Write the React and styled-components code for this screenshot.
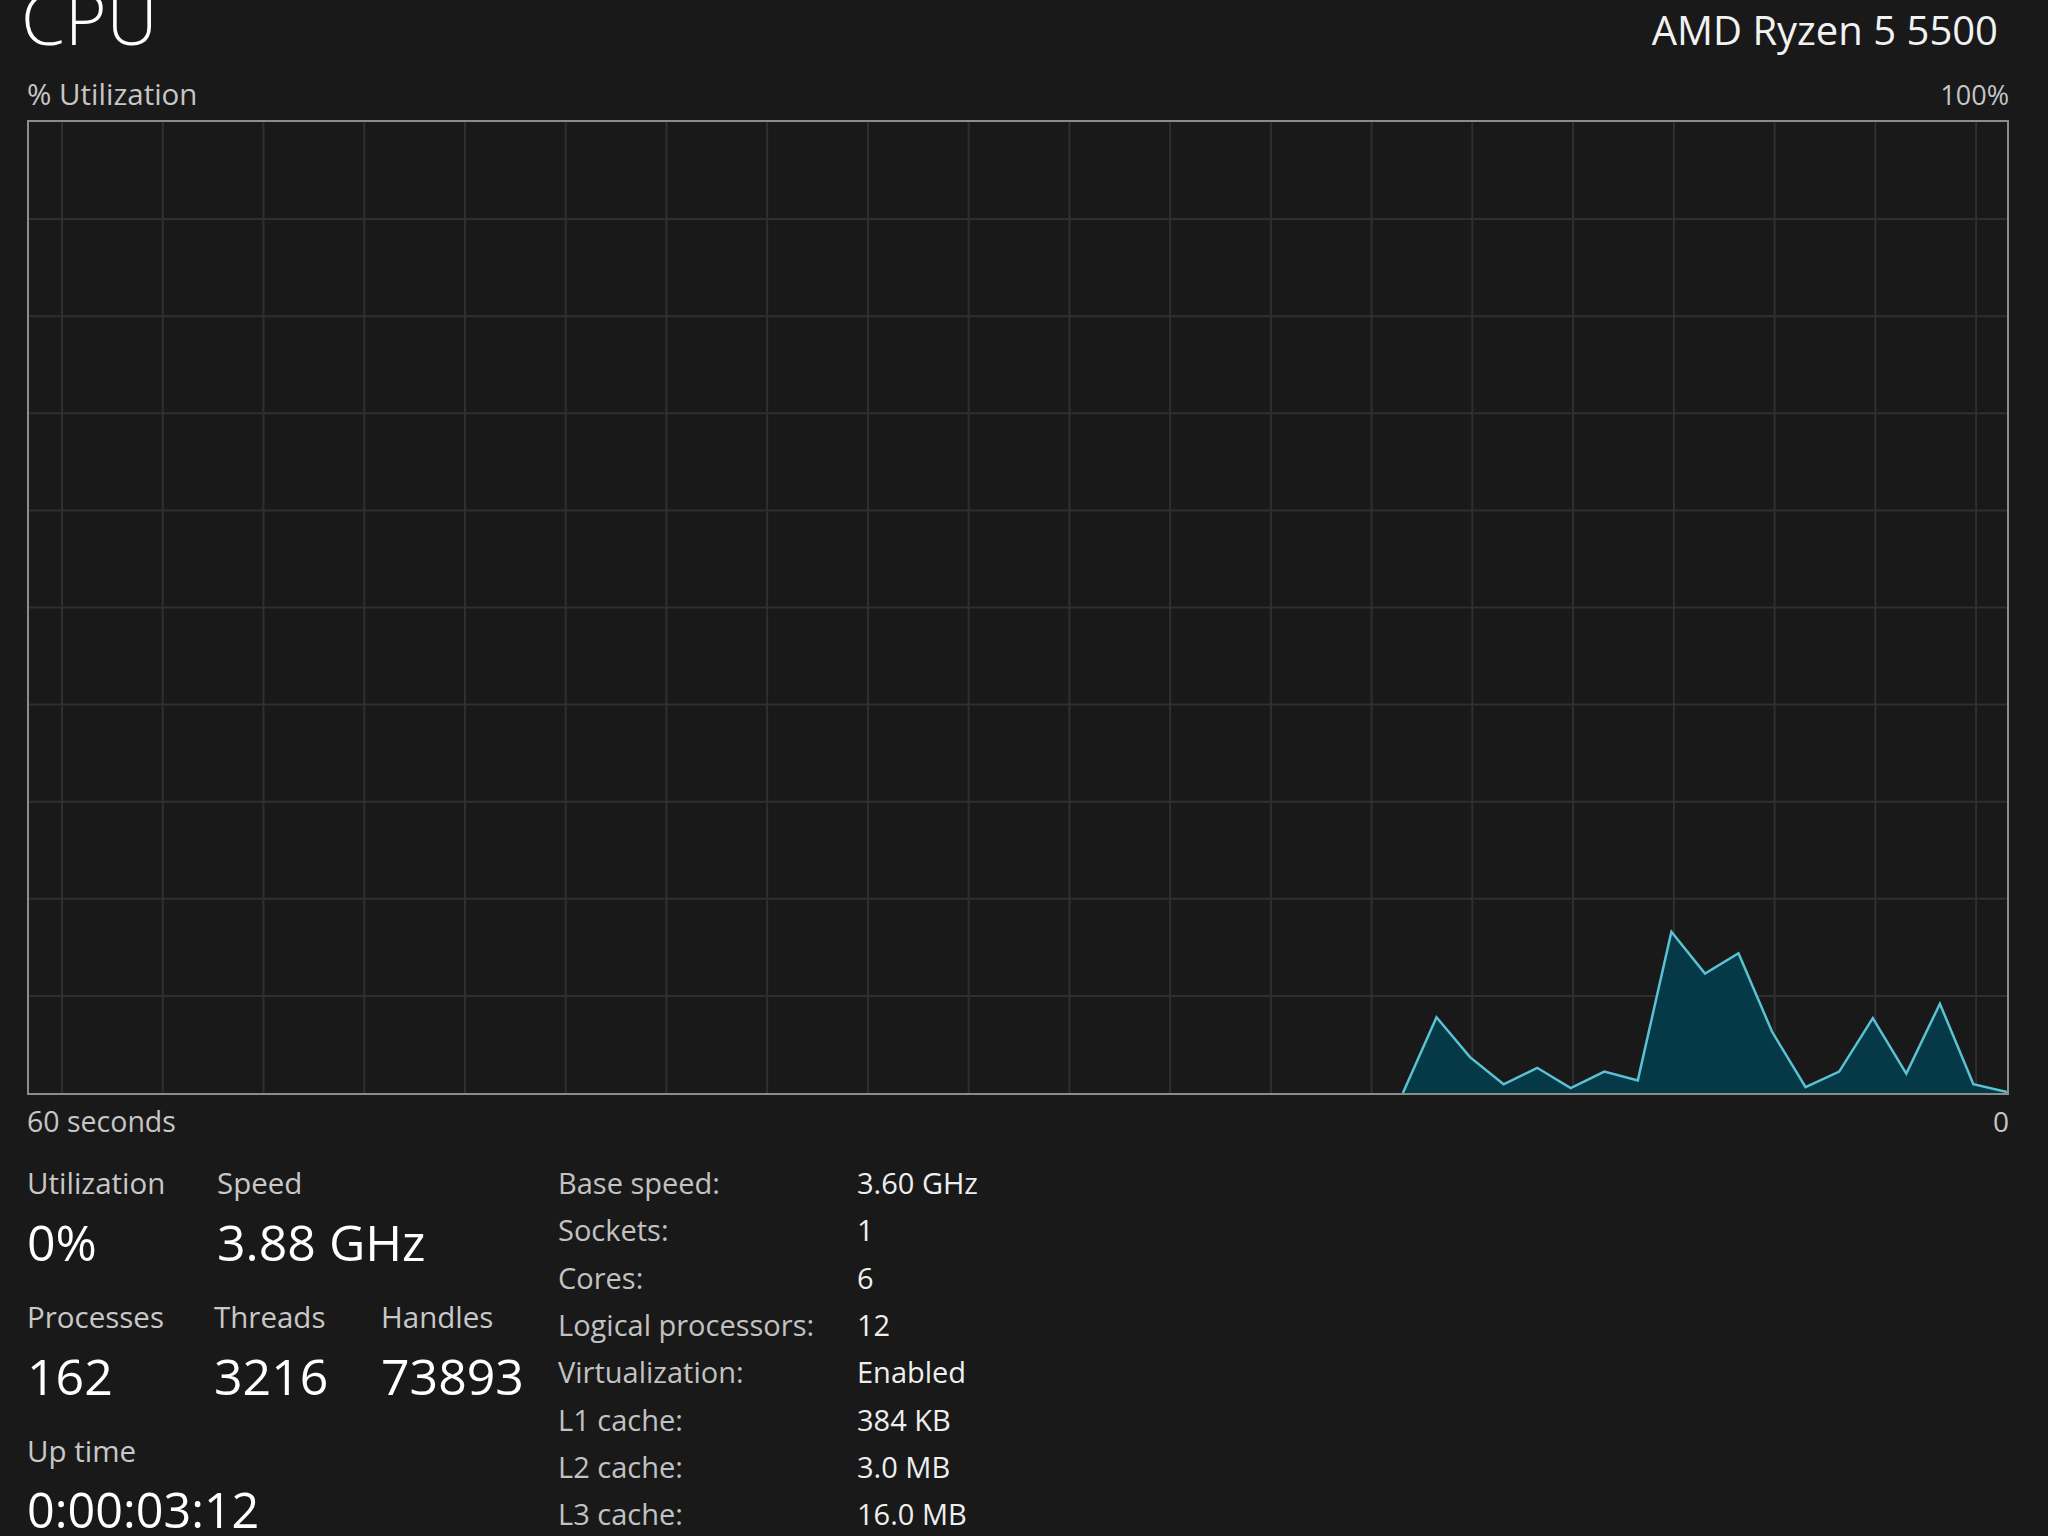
import React from "react";
import styled, { createGlobalStyle } from "styled-components";

const GlobalStyle = createGlobalStyle`
  html, body {
    margin: 0;
    padding: 0;
    background: #191919;
    overflow: hidden;
  }
  body {
    font-family: "Open Sans", "Noto Sans", "Liberation Sans", sans-serif;
    color: #ffffff;
  }
`;

const Page = styled.div`
  width: 2048px;
  height: 1536px;
  box-sizing: border-box;
  padding: 0 39px 0 27px;
  display: flex;
  flex-direction: column;
  overflow: hidden;
`;

const Header = styled.div`
  display: flex;
  justify-content: space-between;
  align-items: baseline;
  height: 40px;
`;

const Title = styled.div`
  font-size: 71px;
  line-height: 36px;
  font-weight: 300;
  margin-left: -6px;
  color: #ffffff;
`;

const Model = styled.div`
  font-size: 40px;
  line-height: 40px;
  color: #f2f2f2;
  margin-right: 11px;
`;

const AxisRow = styled.div`
  display: flex;
  justify-content: space-between;
  align-items: baseline;
  height: 36px;
  line-height: 36px;
  margin-top: ${(p) => p.$gap}px;
  color: #c6c6c6;
`;

const AxisText = styled.span`
  font-size: ${(p) => p.$size}px;
`;

const ChartFrame = styled.div`
  margin-top: 8px;
  height: 975px;
  box-sizing: border-box;
  border: 2px solid #8c8c8c;
  background: #191919;
`;

const ChartSvg = styled.svg`
  display: block;
  width: 100%;
  height: 100%;
`;

const Stats = styled.div`
  margin-top: 20px;
  display: flex;
  align-items: flex-start;
`;

const LeftStats = styled.div`
  width: 531px;
  padding-top: 6px;
  display: flex;
  flex-direction: column;
`;

const StatRow = styled.div`
  display: flex;
  & + & {
    margin-top: 27px;
  }
`;

const Stat = styled.div`
  width: ${(p) => (p.$w ? `${p.$w}px` : "auto")};
  display: flex;
  flex-direction: column;
`;

const StatLabel = styled.div`
  font-size: 29.5px;
  line-height: 36px;
  color: #c8c8c8;
  white-space: nowrap;
`;

const StatValue = styled.div`
  font-size: ${(p) => p.$size || 50}px;
  line-height: ${(p) => (p.$size ? Math.round(p.$size * 1.2) : 60)}px;
  margin-top: ${(p) => p.$mt || 11}px;
  color: #ffffff;
  white-space: nowrap;
`;

const InfoTable = styled.div`
  display: grid;
  grid-template-columns: 299px auto;
  grid-auto-rows: 47.3px;
  align-items: center;
  font-size: 29px;
`;

const InfoLabel = styled.div`
  color: #c2c2c2;
  white-space: nowrap;
`;

const InfoValue = styled.div`
  color: #eeeeee;
  white-space: nowrap;
`;

const W = 1978;
const H = 971;

const tail = [0, 7.8, 3.7, 0.9, 2.6, 0.5, 2.2, 1.3, 16.6, 12.3, 14.4, 6.3, 0.6, 2.2, 7.7, 2.0, 9.2, 0.9, 0.1];
const samples = [...Array(60 - tail.length).fill(0), ...tail];
const step = 33.56;
const xOf = (i) => W - (59 - i) * step;
const yOf = (v) => H - (v / 100) * H;

function CpuChart() {
  const vLines = Array.from({ length: 20 }, (_, k) => 33 + k * 100.74);
  const hLines = Array.from({ length: 9 }, (_, k) => (k + 1) * 97.1);
  const start = 60 - tail.length;
  const pts = samples.map((v, i) => [xOf(i), yOf(v)]).slice(start);
  const line = pts.map(([x, y]) => `${x.toFixed(1)},${y.toFixed(1)}`).join(" ");
  const area = `${pts[0][0].toFixed(1)},${H} ${line} ${W},${H}`;
  return (
    <ChartSvg viewBox={`0 0 ${W} ${H}`} preserveAspectRatio="none">
      {vLines.map((x) => (
        <line key={`v${x}`} x1={x} x2={x} y1={0} y2={H} stroke="#2f2f2f" strokeWidth="2" />
      ))}
      {hLines.map((y) => (
        <line key={`h${y}`} x1={0} x2={W} y1={y} y2={y} stroke="#2f2f2f" strokeWidth="2" />
      ))}
      <polygon points={area} fill="#053947" />
      <polyline points={line} fill="none" stroke="#5ac2d4" strokeWidth="2.5" strokeLinejoin="miter" />
    </ChartSvg>
  );
}

const info = [
  ["Base speed:", "3.60 GHz"],
  ["Sockets:", "1"],
  ["Cores:", "6"],
  ["Logical processors:", "12"],
  ["Virtualization:", "Enabled"],
  ["L1 cache:", "384 KB"],
  ["L2 cache:", "3.0 MB"],
  ["L3 cache:", "16.0 MB"],
];

export default function App() {
  return (
    <>
      <GlobalStyle />
      <Page>
        <Header>
          <Title>CPU</Title>
          <Model>AMD Ryzen 5 5500</Model>
        </Header>
        <AxisRow $gap={36}>
          <AxisText $size={29.5}>% Utilization</AxisText>
          <AxisText $size={27}>100%</AxisText>
        </AxisRow>
        <ChartFrame>
          <CpuChart />
        </ChartFrame>
        <AxisRow $gap={8}>
          <AxisText $size={28.5}>60 seconds</AxisText>
          <AxisText $size={28}>0</AxisText>
        </AxisRow>
        <Stats>
          <LeftStats>
            <StatRow>
              <Stat $w={190}>
                <StatLabel>Utilization</StatLabel>
                <StatValue>0%</StatValue>
              </Stat>
              <Stat>
                <StatLabel>Speed</StatLabel>
                <StatValue>3.88 GHz</StatValue>
              </Stat>
            </StatRow>
            <StatRow>
              <Stat $w={187}>
                <StatLabel>Processes</StatLabel>
                <StatValue>162</StatValue>
              </Stat>
              <Stat $w={167}>
                <StatLabel>Threads</StatLabel>
                <StatValue>3216</StatValue>
              </Stat>
              <Stat>
                <StatLabel>Handles</StatLabel>
                <StatValue>73893</StatValue>
              </Stat>
            </StatRow>
            <StatRow>
              <Stat>
                <StatLabel>Up time</StatLabel>
                <StatValue $size={48.5} $mt={11}>0:00:03:12</StatValue>
              </Stat>
            </StatRow>
          </LeftStats>
          <InfoTable>
            {info.map(([k, v]) => (
              <React.Fragment key={k}>
                <InfoLabel>{k}</InfoLabel>
                <InfoValue>{v}</InfoValue>
              </React.Fragment>
            ))}
          </InfoTable>
        </Stats>
      </Page>
    </>
  );
}
